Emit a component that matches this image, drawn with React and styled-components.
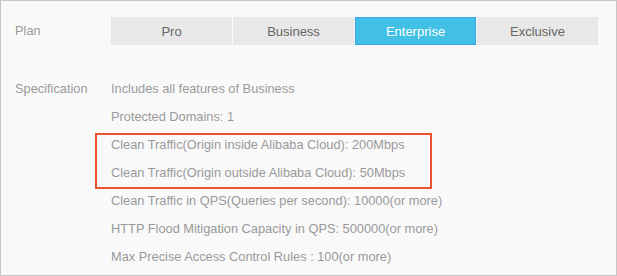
import styled, { createGlobalStyle } from "styled-components";

const GlobalStyle = createGlobalStyle`
  html, body {
    margin: 0;
    padding: 0;
    background: #ffffff;
  }
  * {
    box-sizing: border-box;
  }
`;

const plans = ["Pro", "Business", "Enterprise", "Exclusive"];

const specs = [
  { text: "Includes all features of Business" },
  { text: "Protected Domains: 1" },
  { text: "Clean Traffic(Origin inside Alibaba Cloud): 200Mbps", mark: true },
  { text: "Clean Traffic(Origin outside Alibaba Cloud): 50Mbps", mark: true },
  { text: "Clean Traffic in QPS(Queries per second): 10000(or more)" },
  { text: "HTTP Flood Mitigation Capacity in QPS: 500000(or more)" },
  { text: "Max Precise Access Control Rules : 100(or more)" },
];

export default function App() {
  const marked = specs.filter((s) => s.mark);
  const before = specs.slice(0, 2);
  const after = specs.slice(4);

  return (
    <>
      <GlobalStyle />
      <Panel>
        <PlanRow>
          <Label>Plan</Label>
          <Tabs>
            {plans.map((p) => (
              <Tab key={p} $active={p === "Enterprise"}>
                {p}
              </Tab>
            ))}
          </Tabs>
        </PlanRow>
        <SpecRow>
          <Label>Specification</Label>
          <SpecList>
            {before.map((s) => (
              <SpecLine key={s.text}>{s.text}</SpecLine>
            ))}
            <Highlight>
              {marked.map((s) => (
                <SpecLine key={s.text}>{s.text}</SpecLine>
              ))}
            </Highlight>
            {after.map((s) => (
              <SpecLine key={s.text}>{s.text}</SpecLine>
            ))}
          </SpecList>
        </SpecRow>
      </Panel>
    </>
  );
}

const Panel = styled.div`
  width: 617px;
  height: 276px;
  border: 1px solid #c6c6c6;
  background: #f9f9f9;
  padding: 16px 0 0 14px;
  font-family: "Liberation Sans", Arial, sans-serif;
  overflow: hidden;
`;

const PlanRow = styled.div`
  display: flex;
  align-items: center;
  height: 28px;
`;

const Label = styled.div`
  width: 96px;
  flex: none;
  font-size: 12.8px;
  color: #9a9a9a;
  line-height: 28px;
`;

const Tabs = styled.div`
  display: flex;
  gap: 1px;
`;

const Tab = styled.div`
  width: 121px;
  height: 28px;
  display: flex;
  align-items: center;
  justify-content: center;
  font-size: 13px;
  background: ${(p) => (p.$active ? "#42bfe4" : "#e8e8e8")};
  color: ${(p) => (p.$active ? "#ffffff" : "#666666")};
  border: 1px solid ${(p) => (p.$active ? "#3ba3e6" : "#e8e8e8")};
`;

const SpecRow = styled.div`
  display: flex;
  align-items: flex-start;
  margin-top: 30px;
`;

const SpecList = styled.div`
  display: flex;
  flex-direction: column;
`;

const SpecLine = styled.div`
  font-size: 12.8px;
  line-height: 28px;
  color: #999999;
  white-space: nowrap;
`;

const Highlight = styled.div`
  position: relative;

  &::after {
    content: "";
    position: absolute;
    top: 2px;
    left: -16px;
    width: 333px;
    height: 52px;
    border: 2px solid #ea5330;
    pointer-events: none;
  }
`;
